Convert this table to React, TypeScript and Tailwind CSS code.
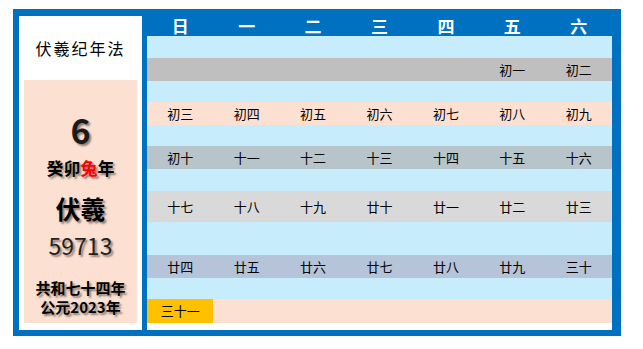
import React from "react";

const cjk = "font-['Noto_Sans_CJK_SC','Noto_Sans',sans-serif]";

const weekdays = ["日", "一", "二", "三", "四", "五", "六"];

// each week: blank light-blue row, then the lunar row
const weeks = [
  { gap: "h-[22px]", row: "h-[23px] bg-[#BFBFBF]", days: ["", "", "", "", "", "初一", "初二"] },
  { gap: "h-[21px]", row: "h-[23px] bg-[#FCE1D3]", days: ["初三", "初四", "初五", "初六", "初七", "初八", "初九"] },
  { gap: "h-[21px]", row: "h-[23px] bg-[#B7C4C9]", days: ["初十", "十一", "十二", "十三", "十四", "十五", "十六"] },
  { gap: "h-[22px]", row: "h-[31px] bg-[#D9D9D9]", days: ["十七", "十八", "十九", "廿十", "廿一", "廿二", "廿三"] },
  { gap: "h-[33px]", row: "h-[23px] bg-[#B5C4D8]", days: ["廿四", "廿五", "廿六", "廿七", "廿八", "廿九", "三十"] },
  { gap: "h-[21px]", row: "h-[24px] bg-[#FCE1D3]", days: ["三十一", "", "", "", "", "", ""] },
];

const shadow = "[text-shadow:2px_2px_2px_rgba(0,0,0,0.45)]";

export default function App() {
  return (
    <div className={`w-[643px] h-[349px] bg-white pl-[13px] pt-[9px] ${cjk}`}>
      <div className="flex w-[608px] h-[327px] bg-[#0070C0] pl-[6px] pr-[9px]">
        {/* Left info panel */}
        <div className="mt-[7px] w-[123px] h-[314px] bg-white px-[5px] flex flex-col">
          <div className="h-[64px] flex items-center justify-center text-[16px] tracking-[2px] text-black">
            伏羲纪年法
          </div>
          <div className="h-[243px] bg-[#FCE1D3] flex flex-col items-center">
            <div className={`mt-[30px] h-[40px] flex items-center text-[34px] font-bold text-[#1a1a1a] leading-none ${shadow}`}>
              6
            </div>
            <div className={`mt-[9px] text-[17px] font-bold leading-none text-black ${shadow}`}>
              癸卯<span className="text-[#FF0000]">兔</span>年
            </div>
            <div className={`mt-[20px] text-[25px] font-bold leading-none text-black ${shadow}`}>
              伏羲
            </div>
            <div className={`mt-[13px] text-[23px] leading-none text-[#222] ${shadow}`}>
              59713
            </div>
            <div className={`mt-[21px] text-[15px] font-bold leading-[19px] text-black text-center ${shadow}`}>
              <div>共和七十四年</div>
              <div>公元2023年</div>
            </div>
          </div>
        </div>

        {/* Calendar */}
        <div className="ml-[5px] w-[465px] flex flex-col">
          <div className="h-[27px] grid grid-cols-7">
            {weekdays.map((d) => (
              <div key={d} className="flex items-center justify-center pt-[4px] text-[17px] font-bold text-white">
                {d}
              </div>
            ))}
          </div>
          <div className="h-[287px] bg-white flex flex-col">
            {weeks.map((w, i) => (
              <React.Fragment key={i}>
                <div className={`${w.gap} bg-[#C7ECFB]`} />
                <div className={`${w.row} grid grid-cols-7`}>
                  {w.days.map((d, j) => (
                    <div
                      key={j}
                      className={`flex items-center justify-center text-[13px] text-black ${
                        d === "三十一" ? "bg-[#FFC000]" : ""
                      }`}
                    >
                      {d}
                    </div>
                  ))}
                </div>
              </React.Fragment>
            ))}
          </div>
          <div className="h-[7px] bg-white" />
        </div>
      </div>
    </div>
  );
}
